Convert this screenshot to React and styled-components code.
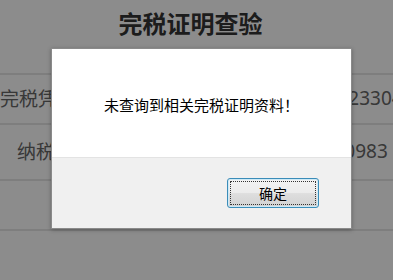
import styled, { createGlobalStyle } from 'styled-components'

const GlobalStyle = createGlobalStyle`
  html, body {
    margin: 0;
    padding: 0;
    background: #fff;
    font-family: "Noto Sans CJK SC", "Noto Sans", sans-serif;
  }
`

const Page = styled.div`
  width: 393px;
  height: 280px;
  overflow: hidden;
  position: relative;
  background: #fff;
`

const Title = styled.h1`
  margin: 0;
  height: 48px;
  line-height: 46px;
  padding-right: 12px;
  text-align: center;
  font-size: 24px;
  font-weight: bold;
  color: #333;
`

const Table = styled.div`
  margin-top: 25px;
  border-top: 2px solid #e6e6e6;
`

const Row = styled.div`
  box-sizing: border-box;
  display: flex;
  align-items: center;
  height: ${p => p.$h}px;
  padding-bottom: 3px;
  border-bottom: 2px solid #e6e6e6;
  white-space: nowrap;
  font-size: 19px;
  color: #666;
`

const Label = styled.div`
  flex: 0 0 131px;
  display: flex;
  justify-content: flex-end;
`

const Value = styled.div`
  padding-left: ${p => p.$pad}px;
  font-family: "Noto Sans", sans-serif;
`

const Mask = styled.div`
  position: absolute;
  inset: 0;
  background: rgba(0, 0, 0, 0.45);
`

const Dialog = styled.div`
  position: absolute;
  left: 51px;
  top: 48px;
  box-sizing: border-box;
  width: 301px;
  height: 181px;
  display: flex;
  flex-direction: column;
  background: #fff;
  border: 1px solid #8a8a8a;
  box-shadow: 0 1px 4px rgba(0, 0, 0, 0.3);
`

const Body = styled.div`
  flex: 0 0 108px;
  display: flex;
  align-items: center;
  justify-content: center;
  padding-top: 3px;
  box-sizing: border-box;
  font-size: 15px;
  color: #000;
`

const Footer = styled.div`
  flex: 1;
  display: flex;
  align-items: center;
  justify-content: flex-end;
  padding-right: 32px;
  background: #f0f0f0;
  border-top: 1px solid #e3e3e3;
`

const OkButton = styled.button`
  position: relative;
  width: 92px;
  height: 30px;
  padding: 0;
  border: 1px solid #3b8cb8;
  border-radius: 3px;
  background: linear-gradient(#f3f3f3, #ececec 48%, #dedede 52%, #d2d2d2);
  box-shadow: inset 0 0 0 1px #cdeaf7;
  font-family: "Noto Sans CJK SC", sans-serif;
  font-size: 14px;
  color: #000;

  &::after {
    content: "";
    position: absolute;
    inset: 2px;
    border: 1px dotted #333;
    border-radius: 1px;
  }
`

export default function App() {
  return (
    <>
      <GlobalStyle />
      <Page>
        <Title>完税证明查验</Title>
        <Table>
          <Row $h={50}>
            <Label>完税凭证号码：</Label>
            <Value $pad={74}>3212301900184233046</Value>
          </Row>
          <Row $h={56}>
            <Label>纳税人名称：</Label>
            <Value $pad={72}>91320000134770983</Value>
          </Row>
          <Row $h={50} />
        </Table>
        <Mask />
        <Dialog>
          <Body>未查询到相关完税证明资料！</Body>
          <Footer>
            <OkButton>确定</OkButton>
          </Footer>
        </Dialog>
      </Page>
    </>
  )
}
